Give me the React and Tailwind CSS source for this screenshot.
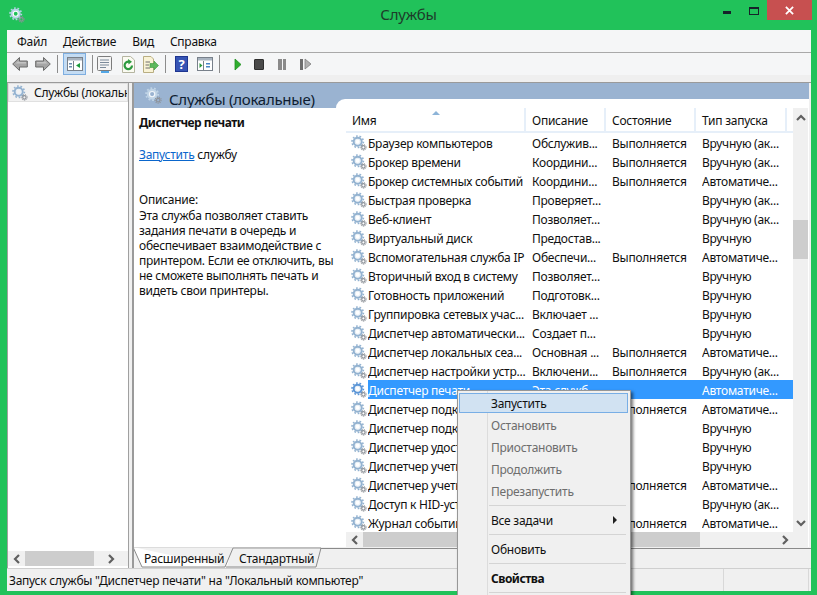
import React from "react";

const rows = [
  ["Браузер компьютеров", "Обслужив...", "Выполняется", "Вручную (ак..."],
  ["Брокер времени", "Координи...", "Выполняется", "Вручную (ак..."],
  ["Брокер системных событий", "Координи...", "Выполняется", "Автоматиче..."],
  ["Быстрая проверка", "Проверяет...", "", "Вручную (ак..."],
  ["Веб-клиент", "Позволяет...", "", "Вручную (ак..."],
  ["Виртуальный диск", "Предостав...", "", "Вручную"],
  ["Вспомогательная служба IP", "Обеспечи...", "Выполняется", "Автоматиче..."],
  ["Вторичный вход в систему", "Позволяет...", "", "Вручную"],
  ["Готовность приложений", "Подготовк...", "", "Вручную"],
  ["Группировка сетевых учас...", "Включает ...", "", "Вручную"],
  ["Диспетчер автоматически...", "Создает п...", "", "Вручную"],
  ["Диспетчер локальных сеа...", "Основная ...", "Выполняется", "Автоматиче..."],
  ["Диспетчер настройки устр...", "Включени...", "Выполняется", "Вручную (ак..."],
  ["Диспетчер печати", "Эта служб...", "", "Автоматиче..."],
  ["Диспетчер подключений", "Управляет", "Выполняется", "Автоматиче..."],
  ["Диспетчер подключений", "Управляет", "", "Вручную"],
  ["Диспетчер удостоверений", "Служба", "", "Вручную"],
  ["Диспетчер учетных данных", "Служба", "", "Вручную"],
  ["Диспетчер учетных записей", "Служба", "Выполняется", "Автоматиче..."],
  ["Доступ к HID-устройствам", "Обеспечи...", "", "Вручную (ак..."],
  ["Журнал событий Windows", "Эта служб...", "Выполняется", "Автоматиче..."],
];

function Gear({ className = "w-4 h-4", main = "#93b2d0", light = "#e8eff6" }) {
  return (
    <svg viewBox="0 0 16 16" className={className}>
      <circle cx="6.7" cy="6.7" r="5.7" fill="none" stroke={main} strokeWidth="1.6" strokeDasharray="1.7 1.8" />
      <circle cx="6.7" cy="6.7" r="3.8" fill="none" stroke={main} strokeWidth="2.4" />
      <circle cx="6.7" cy="6.7" r="2.5" fill="none" stroke={light} strokeWidth="1.1" />
      <circle cx="12.4" cy="12.4" r="2.9" fill="none" stroke="#8d9299" strokeWidth="1" strokeDasharray="1 1" />
      <circle cx="12.4" cy="12.4" r="1.7" fill="none" stroke="#8d9299" strokeWidth="1.2" />
    </svg>
  );
}

function Chevron({ dir }) {
  const d = {
    up: "M1 7 L5 3 L9 7",
    down: "M1 3 L5 7 L9 3",
    left: "M7 1 L3 5 L7 9",
    right: "M3 1 L7 5 L3 9",
  }[dir];
  return (
    <svg viewBox="0 0 10 10" className="w-[10px] h-[10px]">
      <path d={d} fill="none" stroke="#606060" strokeWidth="2.2" />
    </svg>
  );
}

function Arrow({ flip, className = "" }) {
  return (
    <svg viewBox="0 0 16 16" className={`w-[16px] h-[16px] ${flip ? "-scale-x-100" : ""} ${className}`}>
      <path d="M0.7 8 L7.5 1.5 V5 H15.3 V11 H7.5 V14.5 Z" fill="#a6a6a6" stroke="#6a6a6a" strokeWidth="1" />
      <path d="M3 8 L6.5 4.7 V6 H14 V7.5 H3.5 Z" fill="#c4c4c4" />
    </svg>
  );
}

function Sep({ className = "" }) {
  return <div className={`w-px h-[18px] bg-[#8c8c8c] shrink-0 ${className}`} />;
}

function WindowIcon({ children }) {
  return (
    <svg viewBox="0 0 16 14" className="w-[16px] h-[14px]">
      <rect x="0.5" y="0.5" width="15" height="13" fill="#fff" stroke="#78808a" />
      <rect x="1" y="1" width="14" height="2.5" fill="#a9b4c0" />
      <line x1="6.5" y1="4" x2="6.5" y2="13" stroke="#78808a" />
      {children}
    </svg>
  );
}

function Toolbar() {
  return (
    <div className="h-[22px] flex items-center bg-[#f5f6f7] pl-[5px]">
      <Arrow />
      <Arrow flip className="ml-[7px]" />
      <Sep className="ml-[6px]" />
      <div className="ml-[5px] w-[23px] h-[22px] bg-[#c4dcf3] border border-[#7eaee0] flex items-center justify-center">
        <WindowIcon>
          <path d="M13 6 L9 8.5 L13 11 Z" fill="#1c9a3c" />
          <rect x="2" y="6" width="3" height="1.5" fill="#6b8cae" />
          <rect x="2" y="9" width="3" height="1.5" fill="#6b8cae" />
        </WindowIcon>
      </div>
      <Sep className="ml-[6px]" />
      <svg viewBox="0 0 15 17" className="ml-[4px] w-[15px] h-[17px]">
        <rect x="0.5" y="0.5" width="14" height="14" rx="1" fill="#f4f4f4" stroke="#7c7c7c" />
        <path d="M3 4H12M3 6.5H12M3 9H12M3 11.5H9" stroke="#7b8a9a" strokeWidth="1" />
        <rect x="4" y="15" width="8" height="2" fill="#53a7e6" />
      </svg>
      <svg viewBox="0 0 13 17" className="ml-[10px] w-[13px] h-[17px]">
        <path d="M0.5 0.5 H8.5 L12.5 4 V16.5 H0.5 Z" fill="#fbfbf2" stroke="#b5b5a0" />
        <path d="M10 9.5 A3.7 3.7 0 1 1 7 5.8" fill="none" stroke="#2c9a3e" strokeWidth="2.2" />
        <path d="M6 3 L10 5.7 L6.5 8.5 Z" fill="#2c9a3e" />
      </svg>
      <svg viewBox="0 0 16 17" className="ml-[8px] w-[16px] h-[17px]">
        <path d="M0.5 0.5 H8 L10.5 3 V16.5 H0.5 Z" fill="#f9f3d6" stroke="#b9ae82" />
        <path d="M2.5 6H7M2.5 9H6M2.5 12H7" stroke="#6f6f6f" strokeWidth="1" />
        <path d="M7 7.5H11V5L15.5 9.5L11 14V11.5H7Z" fill="#5cb85c" stroke="#3d9a3d" strokeWidth="0.6" />
      </svg>
      <Sep className="ml-[6px]" />
      <div className="ml-[9px] w-[13px] h-[16px] shrink-0 bg-[#3654b4] border border-[#1e3590] flex items-center justify-center text-white font-bold text-[13px] leading-none">?</div>
      <div className="ml-[9px] w-[16px] h-[14px]">
        <WindowIcon>
          <path d="M2.5 6 L5.5 8.5 L2.5 11 Z" fill="#2c9a3e" />
          <rect x="9" y="6" width="4" height="1.5" fill="#4b86c6" />
          <rect x="9" y="9" width="4" height="1.5" fill="#4b86c6" />
        </WindowIcon>
      </div>
      <Sep className="ml-[6px]" />
      <svg viewBox="0 0 8 13" className="ml-[14px] w-[8px] h-[13px]">
        <path d="M1 1 L7 6.5 L1 12 Z" fill="#2fae2f" stroke="#1f8f1f" strokeWidth="0.8" />
      </svg>
      <div className="ml-[12px] w-[10px] h-[11px] bg-[#4a4a4a] rounded-[1px] border border-[#2f2f2f]" />
      <div className="ml-[14px] flex gap-px">
        <div className="w-[3.5px] h-[11px] bg-[#8a8a8a]" />
        <div className="w-[3.5px] h-[11px] bg-[#8a8a8a]" />
      </div>
      <div className="ml-[14px] flex gap-px items-center">
        <div className="w-[3px] h-[11px] bg-[#6e6e6e]" />
        <svg viewBox="0 0 8 12" className="w-[8px] h-[12px]">
          <path d="M1 1 L7 6 L1 11 Z" fill="#b0b0b0" stroke="#808080" strokeWidth="0.8" />
        </svg>
      </div>
    </div>
  );
}

function Row({ r, selected }) {
  return (
    <div className="h-[19px] flex items-center pl-[15px] shrink-0">
      <Gear className="w-[16px] h-[16px] shrink-0" main={selected ? "#5b95d6" : "#93b2d0"} />
      <div className={`ml-px flex-1 h-[19px] pt-px flex items-center ${selected ? "bg-[#3399ff] text-white" : "text-[#101010]"}`}>
        <div className="w-[164px] whitespace-nowrap overflow-hidden">{r[0]}</div>
        <div className="w-[80px] whitespace-nowrap overflow-hidden">{r[1]}</div>
        <div className="w-[90px] whitespace-nowrap overflow-hidden">{r[2]}</div>
        <div className="flex-1 whitespace-nowrap overflow-hidden">{r[3]}</div>
      </div>
    </div>
  );
}

function HeaderCell({ w, children }) {
  return <div className={`${w} h-full flex items-center pl-[6px] pt-px border-r-2 border-[#e6eff9] shrink-0`}>{children}</div>;
}

function MenuItem({ children, disabled, hot, bold, arrow }) {
  return (
    <div className={`flex items-center pl-[31px] pr-[10px] justify-between ${hot ? "h-[20px] mb-px bg-[#d1e2f2] border border-[#78aee5]" : "h-[22px] border border-transparent"} ${disabled ? "text-[#6d6d6d]" : "text-[#101010]"} ${bold ? "font-bold tracking-[-0.5px]" : ""}`}>
      <span>{children}</span>
      {arrow && <span className="w-0 h-0 border-y-[4px] border-y-transparent border-l-[4px] border-l-[#202020]" />}
    </div>
  );
}

function MenuSep() {
  return (
    <div className="h-[7px] flex items-center pl-[30px] pr-[2px]">
      <div className="h-px w-full bg-[#d4d4d4]" />
    </div>
  );
}

export default function App() {
  return (
    <div className="relative w-[817px] h-[595px] overflow-hidden bg-[#21c25a] text-[12px] leading-[15px] tracking-[-0.25px] font-['Noto_Sans',sans-serif] text-[#101010] flex flex-col">
      {/* title bar */}
      <div className="h-[30px] grid grid-cols-3 shrink-0">
        <div className="pl-[9px] pt-[7px]">
          <Gear className="w-[16px] h-[16px]" main="#b7d4e8" light="#ffffff" />
        </div>
        <div className="text-center text-[15px] leading-[29px] text-[#1d3b2a]">Службы</div>
        <div className="flex justify-end items-start pr-[5px]">
          <div className="w-[8px] h-[3px] bg-[#16222a] mt-[11px]" />
          <div className="w-[10px] h-[8px] border border-t-2 border-[#16222a] mt-[7px] ml-[18px]" />
          <div className="w-[45px] h-[20px] bg-[#c75050] ml-[8px] flex items-center justify-center">
            <svg viewBox="0 0 10 10" className="w-[9px] h-[9px]">
              <path d="M1 1 L9 9 M9 1 L1 9" stroke="#fff" strokeWidth="2" />
            </svg>
          </div>
        </div>
      </div>

      {/* client */}
      <div className="ml-[7px] w-[804px] h-[561px] bg-[#f0f0f0] flex flex-col shrink-0">
        <div className="h-[22px] bg-[#f5f6f7] flex items-center gap-[16px] pl-[10px] border-b border-[#a9a9a9] box-content">
          <span>Файл</span>
          <span>Действие</span>
          <span>Вид</span>
          <span>Справка</span>
        </div>
        <Toolbar />
        <div className="h-[8px] bg-[#efefef] border-b border-[#9a9a9a]" />
        <div className="flex h-[485px]">
          {/* tree */}
          <div className="w-[122px] bg-white border-x border-[#a0a0a0] flex flex-col shrink-0">
            <div className="flex-1">
              <div className="h-[19px] flex items-center pl-[3px] bg-[#f2f2f2] border border-[#e0e0e0] overflow-hidden whitespace-nowrap">
                <Gear className="w-[16px] h-[16px] shrink-0" />
                <span className="ml-[6px]">Службы (локальные)</span>
              </div>
            </div>
            <div className="h-[15px] mb-[2px] bg-[#f0f0f0] flex items-center">
              <div className="w-[17px] flex justify-center"><Chevron dir="left" /></div>
              <div className="w-[69px] h-full bg-[#cdcdcd]" />
              <div className="flex-1 flex justify-center"><Chevron dir="right" /></div>
            </div>
          </div>
          <div className="w-[3px] shrink-0" />
          {/* right */}
          <div className="flex-1 min-w-0 border-l-2 border-[#9a9a9a] flex flex-col">
            <div className="h-[25px] bg-[#9ab3d1] flex items-start shrink-0 mr-[2px]">
              <Gear className="ml-[11px] mt-[4px] w-[17px] h-[17px] shrink-0" main="#c0d4e6" light="#f3f7fb" />
              <span className="ml-[7px] text-[15px] leading-[32px] text-[#0e1c30]">Службы (локальные)</span>
            </div>
            <div className="-mt-[9px] flex h-[448px] mr-[2px] shrink-0 relative">
              <div className="w-[202px] pt-[9px] shrink-0">
                <div className="bg-white h-full pl-[5px] pr-[4px] pt-[7px] whitespace-nowrap">
                  <div className="font-bold tracking-[-0.5px]">Диспетчер печати</div>
                  <div className="mt-[17px]">
                    <span className="text-[#0a66cc] underline">Запустить</span> службу
                  </div>
                  <div className="mt-[30px]">Описание:</div>
                  <div className="mt-px">
                    Эта служба позволяет ставить<br />
                    задания печати в очередь и<br />
                    обеспечивает взаимодействие с<br />
                    принтером. Если ее отключить, вы<br />
                    не сможете выполнять печать и<br />
                    видеть свои принтеры.
                  </div>
                </div>
              </div>
              <div className="flex-1 min-w-0 bg-white rounded-tl-[9px] pt-[9px] flex">
                <div className="w-[457px] shrink-0 flex flex-col">
                  <div className="flex-1 min-h-0 flex flex-col overflow-hidden">
                    <div className="relative h-[25px] flex ml-[10px] border-b-2 border-[#e6eff9] shrink-0">
                      <HeaderCell w="w-[180px]">Имя</HeaderCell>
                      <HeaderCell w="w-[80px]">Описание</HeaderCell>
                      <HeaderCell w="w-[90px]">Состояние</HeaderCell>
                      <HeaderCell w="w-[91px]">Тип запуска</HeaderCell>
                      <span className="absolute left-[86px] top-[3px] w-0 h-0 border-x-[4px] border-x-transparent border-b-[4px] border-b-[#8db4d8]" />
                    </div>
                    {rows.map((r, i) => (
                      <Row key={i} r={r} selected={i === 13} />
                    ))}
                  </div>
                  <div className="h-[15px] ml-[10px] bg-[#f0f0f0] flex items-center shrink-0">
                    <div className="w-[17px] flex justify-center"><Chevron dir="left" /></div>
                    <div className="w-[337px] h-full bg-[#cdcdcd]" />
                    <div className="flex-1 flex justify-end pr-[3px]"><Chevron dir="right" /></div>
                  </div>
                </div>
                <div className="w-[15px] bg-[#f0f0f0] flex flex-col items-center shrink-0">
                  <div className="h-[20px] flex items-center"><Chevron dir="up" /></div>
                  <div className="w-full h-[39px] mt-[92px] bg-[#cdcdcd]" />
                  <div className="mt-auto h-[35px] flex items-start pt-[6px]"><Chevron dir="down" /></div>
                </div>
              </div>
            </div>
            {/* tabs */}
            <div className="relative flex-1 pl-[10px] pt-px flex items-center">
              <svg viewBox="0 0 677 21" className="absolute inset-0 w-full h-full">
                <path d="M-1 0 L8 20 H91 L99 1 H186 L181 20 H91" fill="#ffffff" stroke="none" />
                <path d="M98 2 H187 L182 20 H93 Z" fill="#f0f0f0" />
                <path d="M-1 0 L8 20 H91 L99 1 H187 L182 20 H92 M187 1.5 H677" fill="none" stroke="#8a8a8a" strokeWidth="1" />
                <path d="M-1 0.5 H99" stroke="#dcdcdc" strokeWidth="1" />
              </svg>
              <span className="relative w-[95px]">Расширенный</span>
              <span className="relative">Стандартный</span>
            </div>
          </div>
        </div>
        {/* status */}
        <div className="flex-1 flex border-t border-[#cfcfcf] items-center pl-[2px]">
          <div className="w-[714px] whitespace-nowrap">Запуск службы "Диспетчер печати" на "Локальный компьютер"</div>
          <div className="w-px h-full bg-[#d8d8d8]" />
          <div className="w-[84px]" />
          <div className="w-px h-full bg-[#d8d8d8]" />
        </div>
      </div>

      {/* context menu */}
      <div className="absolute left-[457px] top-[390px] w-[174px] h-[220px] bg-[#f0f0f0] border border-[#979797] shadow-[2px_2px_3px_rgba(0,0,0,0.55)] pl-px pr-[2px] pt-[2px]">
        <div className="absolute left-[29px] top-0 bottom-0 w-px bg-[#dcdcdc]" />
        <div className="relative">
          <MenuItem hot>Запустить</MenuItem>
          <MenuItem disabled>Остановить</MenuItem>
          <MenuItem disabled>Приостановить</MenuItem>
          <MenuItem disabled>Продолжить</MenuItem>
          <MenuItem disabled>Перезапустить</MenuItem>
          <MenuSep />
          <MenuItem arrow>Все задачи</MenuItem>
          <MenuSep />
          <MenuItem>Обновить</MenuItem>
          <MenuSep />
          <MenuItem bold>Свойства</MenuItem>
          <MenuSep />
        </div>
      </div>
    </div>
  );
}
